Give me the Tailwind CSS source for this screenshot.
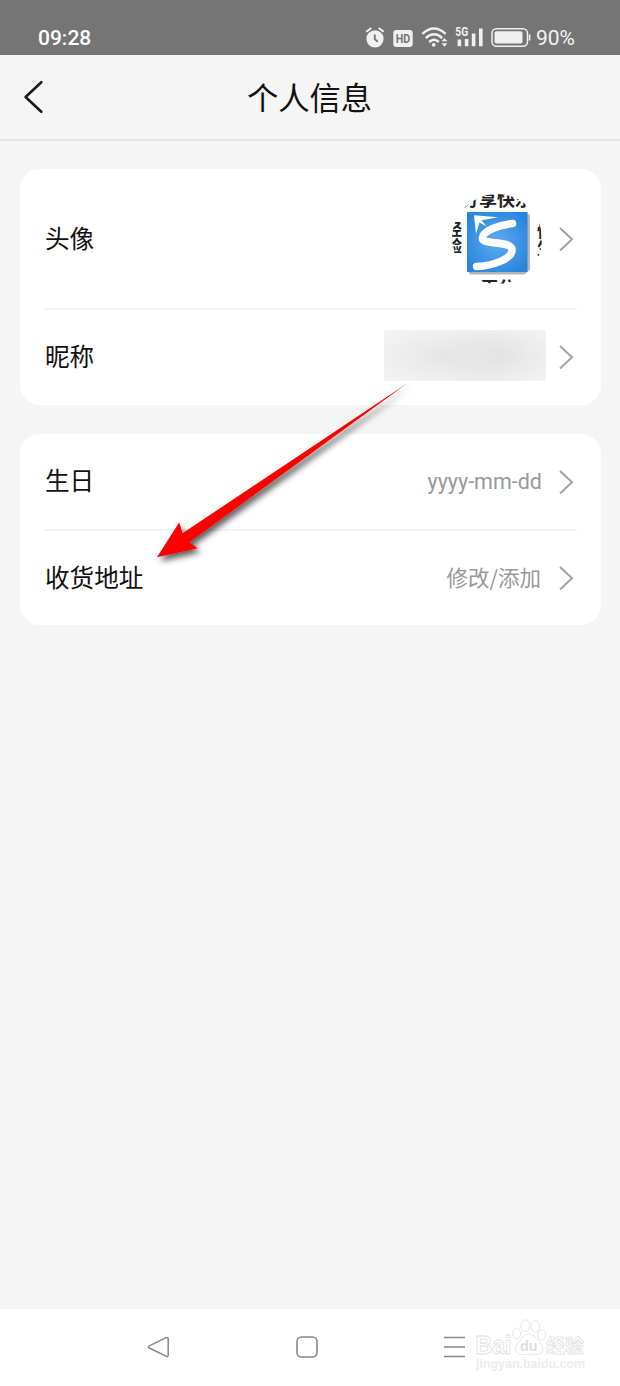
<!DOCTYPE html>
<html lang="zh-CN">
<head>
    <meta charset="UTF-8">
    <meta name="viewport" content="width=device-width, initial-scale=1.0">
    <title>个人信息</title>
    <script src="https://cdn.jsdelivr.net/npm/@tailwindcss/browser@4"></script>
</head>
<body class="relative flex h-[1386px] w-[620px] flex-col overflow-hidden bg-[#f5f5f5] font-['Noto_Sans_CJK_SC',sans-serif] text-[#111]">
    <!-- Status bar -->
    <div class="flex h-[55px] shrink-0 items-end justify-between bg-[#757575] pr-[45px] pb-1 pl-[38px] font-[Roboto,sans-serif] text-white">
        <span class="text-[21px] leading-[25px] font-medium">09:28</span>
        <div class="flex items-center">
            <svg class="h-[25px] w-[171px]" viewBox="365 26 171 25" fill="none">
                <!-- Alarm -->
                <circle cx="375" cy="38.8" r="8.6" fill="#f0f0f0"/>
                <path d="M366.3 31.8l5-3.8M383.7 31.8l-5-3.8" stroke="#f0f0f0" stroke-width="2"/>
                <path d="M374.8 34.5v4.7l3 2.6" stroke="#757575" stroke-width="1.8"/>
                <!-- HD -->
                <rect x="393.3" y="30" width="19.4" height="17" rx="3" fill="#f0f0f0"/>
                <text x="403" y="43.4" text-anchor="middle" textLength="14.5" lengthAdjust="spacingAndGlyphs" font-size="13.5" font-weight="700" fill="#757575">HD</text>
                <!-- Wifi -->
                <g stroke="#f0f0f0" stroke-width="2.5">
                    <path d="M422.4 33.8q11.6-10.6 23.2 0"/>
                    <path d="M425.8 38.1q8.2-7.6 16.4 0"/>
                    <path d="M429.2 42q4.8-4.4 9.6 0"/>
                </g>
                <circle cx="433.7" cy="44.8" r="1.9" fill="#f0f0f0"/>
                <path d="M441.6 41.3l2.9-3.4 2.9 3.4zM441.6 43.3l2.9 3.4 2.9-3.4z" fill="#f0f0f0"/>
                <!-- Signal -->
                <text x="455.3" y="36" textLength="13" lengthAdjust="spacingAndGlyphs" font-size="12" font-weight="700" fill="#f0f0f0">5G</text>
                <path d="M457.6 39.5h3.6v6.8h-3.6zM464.8 39h3.6v7.3h-3.6zM471.8 33.5h3.6v12.8h-3.6zM479 28.5h3.6v17.8H479z" fill="#f0f0f0"/>
                <!-- Battery -->
                <rect x="492" y="28.7" width="35.5" height="17.6" rx="4.5" stroke="#f0f0f0" stroke-width="1.5"/>
                <rect x="494.5" y="31.2" width="28" height="12.2" rx="2" fill="#f0f0f0"/>
                <path d="M529.6 34.5v6" stroke="#f0f0f0" stroke-width="1.6"/>
            </svg>
            <span class="text-[21px] leading-[25px] text-[#f4f4f4]">90%</span>
        </div>
    </div>

    <!-- Header -->
    <header class="flex h-[86px] shrink-0 items-center border-b-2 border-[#e4e4e4] px-[23px]">
        <svg class="h-9 w-6" viewBox="0 0 24 36" fill="none" stroke="#1a1a1a" stroke-width="2.6" stroke-linecap="round" stroke-linejoin="round">
            <path d="M18.3 3.2L2.6 18l15.7 14.8"/>
        </svg>
        <h1 class="flex-1 pr-[25px] text-center text-[31.3px] leading-[44px]">个人信息</h1>
    </header>

    <main class="flex flex-1 flex-col gap-[29px] pt-[28px] pr-[19px] pl-[20px]">
        <section class="rounded-[20px] bg-white px-6">
            <div class="flex h-[141px] items-center border-b-2 border-[#f3f3f3] pr-[3px] pl-[1px]">
                <span class="flex-1 pb-[3px] text-[24.6px]">头像</span>
                <svg class="mr-[15px] h-[92px] w-[92px]" viewBox="451 192 92 92" fill="none">
                    <defs>
                        <clipPath id="avatar"><circle cx="497" cy="238" r="45"/></clipPath>
                        <radialGradient id="blue" cx="0.5" cy="0.5" r="0.6">
                            <stop offset="0" stop-color="#62abee"/>
                            <stop offset="1" stop-color="#2785df"/>
                        </radialGradient>
                    </defs>
                    <g clip-path="url(#avatar)">
                        <g fill="#222" font-weight="700">
                            <text x="461" y="204.5" font-size="18">分享快乐</text>
                            <text x="446" y="234" font-size="16">经</text>
                            <text x="446" y="251" font-size="16">验</text>
                            <text x="537" y="236" font-size="16">情</text>
                            <text x="537" y="253" font-size="16">生</text>
                            <text x="481" y="292.5" font-size="17">百分</text>
                        </g>
                        <rect x="463" y="207" width="73" height="69" fill="#fff"/>
                        <rect x="469" y="213" width="61" height="60.5" rx="2" fill="#b5b5b5"/>
                        <rect x="467" y="211" width="60.5" height="60" fill="url(#blue)"/>
                        <path d="M512.5 222.5C499 224 482 230 482.5 237.5c.3 6.500 29 2 29.500 11 .5 9.500-20 16.500-35.500 17" stroke="#fff" stroke-width="7.6" stroke-linecap="round" stroke-linejoin="round"/>
                        <path d="M474 214.300L498 216.300 481.500 219.300 486.500 225.500 479.500 221.500 476 233z" fill="#fff"/>
                    </g>
                </svg>
                <svg class="h-6 w-4" viewBox="0 0 16 24" fill="none" stroke="#a3a3a3" stroke-width="2"><path d="M2 1l12 11.300L2 23.500"/></svg>
            </div>
            <div class="flex h-[95px] items-center pr-[3px] pb-px pl-[1px]">
                <span class="flex-1 pb-[3px] text-[24.6px]">昵称</span>
                <div class="mr-3 mb-[3px] h-[51px] w-[162px] bg-[#f5f5f5] bg-[radial-gradient(70px_38px_at_72%_50%,#e3e3e3_0%,transparent_100%),radial-gradient(85px_36px_at_36%_52%,#e6e6e6_0%,transparent_100%)]"></div>
                <svg class="h-6 w-4" viewBox="0 0 16 24" fill="none" stroke="#a3a3a3" stroke-width="2"><path d="M2 1l12 11.300L2 23.500"/></svg>
            </div>
        </section>

        <section class="rounded-[20px] bg-white px-6">
            <div class="flex h-[97px] items-center border-b-2 border-[#f3f3f3] pr-[3px] pl-[1px]">
                <span class="flex-1 pb-1 text-[24.6px]">生日</span>
                <span class="mr-4 pt-px font-[Roboto,sans-serif] text-[21.5px] text-[#999]">yyyy-mm-dd</span>
                <svg class="h-6 w-4" viewBox="0 0 16 24" fill="none" stroke="#a3a3a3" stroke-width="2"><path d="M2 1l12 11.300L2 23.500"/></svg>
            </div>
            <div class="flex h-[94px] items-center pr-[3px] pl-[1px]">
                <span class="flex-1 pb-[3px] text-[24.6px]">收货地址</span>
                <span class="mr-[17px] pb-[2px] text-[21.5px] text-[#999]">修改/添加</span>
                <svg class="h-6 w-4" viewBox="0 0 16 24" fill="none" stroke="#a3a3a3" stroke-width="2"><path d="M2 1l12 11.300L2 23.500"/></svg>
            </div>
        </section>
    </main>

    <!-- System navigation -->
    <nav class="flex h-[77px] shrink-0 items-center bg-white pb-px pl-[147px]">
        <svg class="h-6 w-6" viewBox="0 0 24 24" fill="none" stroke="#888" stroke-width="1.5" stroke-linejoin="round">
            <path d="M2.300 10.900L19 2.600Q21.200 1.900 21.200 4v16Q21.200 22 19 21.200L2.300 13Q.6 12 2.300 10.900z"/>
        </svg>
        <svg class="ml-[124px] h-6 w-6" viewBox="0 0 24 24" fill="none" stroke="#888" stroke-width="1.6">
            <rect x="2" y="2" width="20" height="20" rx="4.5"/>
        </svg>
        <svg class="ml-[123px] h-6 w-6" viewBox="0 0 24 24" stroke="#888" stroke-width="1.6"><path d="M2 2.500h21M2 12h21M2 21.500h21"/></svg>
        <!-- Baidu mark -->
        <svg class="ml-[7px] h-[60px] w-[114px]" viewBox="473 1317 114 60" fill="#fff" stroke="#dedede" stroke-width="0.8">
            <ellipse cx="516.7" cy="1333.5" rx="4" ry="5.5"/>
            <ellipse cx="525.3" cy="1325.7" rx="4.3" ry="6"/>
            <ellipse cx="535.3" cy="1326.5" rx="4.3" ry="5.8"/>
            <ellipse cx="541.7" cy="1335" rx="4" ry="5.3"/>
            <path d="M529 1334c-5 0-7 5-11 9-5 5-2.500 12 3.500 11.500 5-.5 10-.5 14.500 0 7 .5 9-6 4.500-11-4-4-6-9.500-11.500-9.500z"/>
            <g font-family="'Liberation Sans', sans-serif" font-weight="700">
                <text x="475.5" y="1354" textLength="36" lengthAdjust="spacingAndGlyphs" font-size="25">Bai</text>
                <text x="520" y="1351" textLength="17.5" lengthAdjust="spacingAndGlyphs" font-size="15" fill="#dedede" stroke="none">du</text>
                <text x="476" y="1368" textLength="109" lengthAdjust="spacingAndGlyphs" font-size="13.5" fill="#ececec" stroke="none">jingyan.baidu.com</text>
            </g>
            <text x="546" y="1352.5" textLength="38" lengthAdjust="spacingAndGlyphs" font-size="19" font-weight="700" stroke-width="0.7">经验</text>
        </svg>
    </nav>

    <!-- Pointer to the address row -->
    <svg class="pointer-events-none absolute top-[370px] left-[140px] h-[205px] w-[290px] overflow-visible" viewBox="140 370 290 205">
        <defs>
            <filter id="shadow" x="-10%" y="-10%" width="125%" height="125%">
                <feDropShadow dx="3" dy="4" stdDeviation="3" flood-color="#000" flood-opacity="0.65"/>
            </filter>
        </defs>
        <path d="M157 557.300L179.300 522.300 182.500 533.300 408 382.800 189.300 542.300 197.700 548.300z" fill="#f00" filter="url(#shadow)"/>
    </svg>
</body>
</html>
